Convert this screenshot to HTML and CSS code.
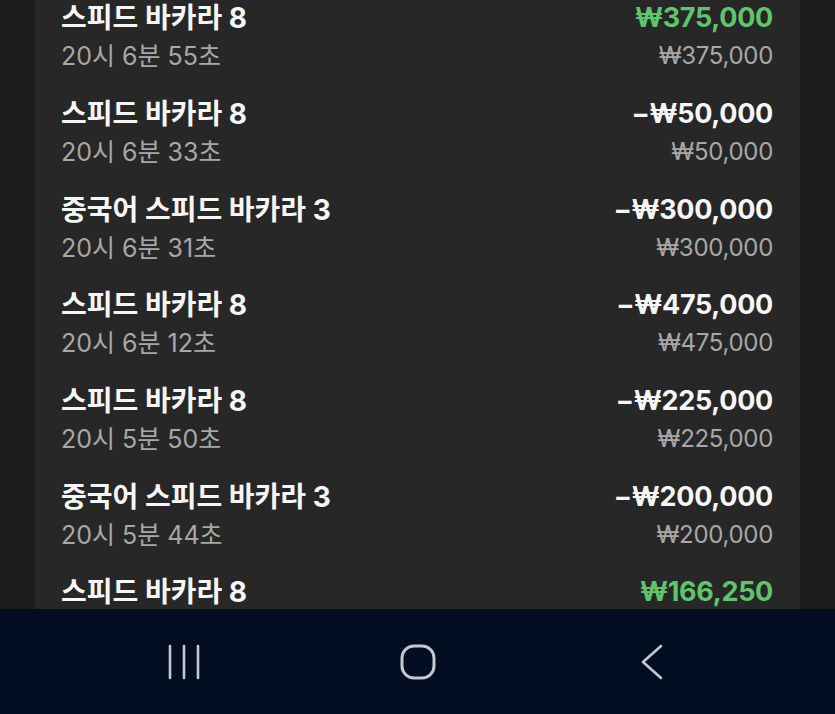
FILE: index.html
```html
<!DOCTYPE html>
<html lang="ko">
<head>
  <meta charset="UTF-8">
  <meta name="viewport" content="width=device-width, initial-scale=1">
  <title>베팅 내역</title>
  <link rel="stylesheet" href="styles.css">
</head>
<body>
  <div class="screen">
    <div class="content">
      <div class="card">
        <ul class="bet-list">
          <li class="bet-row">
            <div class="bet-info">
              <div class="bet-game">스피드 바카라 8</div>
              <div class="bet-time">20시 6분 55초</div>
            </div>
            <div class="bet-money">
              <div class="bet-result win">₩375,000</div>
              <div class="bet-stake">₩375,000</div>
            </div>
          </li>
          <li class="bet-row">
            <div class="bet-info">
              <div class="bet-game">스피드 바카라 8</div>
              <div class="bet-time">20시 6분 33초</div>
            </div>
            <div class="bet-money">
              <div class="bet-result">−₩50,000</div>
              <div class="bet-stake">₩50,000</div>
            </div>
          </li>
          <li class="bet-row">
            <div class="bet-info">
              <div class="bet-game">중국어 스피드 바카라 3</div>
              <div class="bet-time">20시 6분 31초</div>
            </div>
            <div class="bet-money">
              <div class="bet-result">−₩300,000</div>
              <div class="bet-stake">₩300,000</div>
            </div>
          </li>
          <li class="bet-row">
            <div class="bet-info">
              <div class="bet-game">스피드 바카라 8</div>
              <div class="bet-time">20시 6분 12초</div>
            </div>
            <div class="bet-money">
              <div class="bet-result">−₩475,000</div>
              <div class="bet-stake">₩475,000</div>
            </div>
          </li>
          <li class="bet-row">
            <div class="bet-info">
              <div class="bet-game">스피드 바카라 8</div>
              <div class="bet-time">20시 5분 50초</div>
            </div>
            <div class="bet-money">
              <div class="bet-result">−₩225,000</div>
              <div class="bet-stake">₩225,000</div>
            </div>
          </li>
          <li class="bet-row">
            <div class="bet-info">
              <div class="bet-game">중국어 스피드 바카라 3</div>
              <div class="bet-time">20시 5분 44초</div>
            </div>
            <div class="bet-money">
              <div class="bet-result">−₩200,000</div>
              <div class="bet-stake">₩200,000</div>
            </div>
          </li>
          <li class="bet-row">
            <div class="bet-info">
              <div class="bet-game">스피드 바카라 8</div>
            </div>
            <div class="bet-money">
              <div class="bet-result win">₩166,250</div>
            </div>
          </li>
        </ul>
      </div>
    </div>

    <nav class="navbar">
      <button class="nav-btn" aria-label="최근 앱">
        <svg width="34" height="36" viewBox="0 0 34 36">
          <path d="M3 2v32M17 2v32M31 2v32" stroke="#c4c7ce" stroke-width="2.6" stroke-linecap="round" fill="none"/>
        </svg>
      </button>
      <button class="nav-btn" aria-label="홈">
        <svg width="36" height="36" viewBox="0 0 36 36">
          <rect x="2" y="2" width="32" height="32" rx="12" stroke="#c4c7ce" stroke-width="3" fill="none"/>
        </svg>
      </button>
      <button class="nav-btn" aria-label="뒤로">
        <svg width="24" height="36" viewBox="0 0 24 36">
          <path d="M21 2L3 18l18 16" stroke="#c4c7ce" stroke-width="2.6" stroke-linecap="round" stroke-linejoin="round" fill="none"/>
        </svg>
      </button>
    </nav>
  </div>
</body>
</html>
```

FILE: styles.css
```css
html, body {
  margin: 0;
  padding: 0;
  height: 100%;
}
body {
  background: #1c1c1c;
  color: #f4f4f4;
  font-family: "Inter", "Noto Sans CJK KR", sans-serif;
  overflow: hidden;
}
.screen {
  display: flex;
  flex-direction: column;
  height: 714px;
}
.content {
  flex: 1;
  overflow: hidden;
  padding: 0 35px;
}
.card {
  background: #272727;
  height: 100%;
  overflow: hidden;
}
.bet-list {
  list-style: none;
  margin: -10px 0 0 0;
  padding: 0 27px 0 26px;
}
.bet-row {
  display: flex;
  justify-content: space-between;
  align-items: flex-start;
  padding: 14.33px 0;
}
.bet-game,
.bet-result {
  font-size: 28px;
  font-weight: 700;
  line-height: 28px;
  color: #f6f6f6;
}
.bet-result {
  font-size: 27px;
  letter-spacing: -0.3px;
}
.bet-time,
.bet-stake {
  margin-top: 9px;
  font-size: 25px;
  line-height: 30px;
  color: #a7a7a7;
}
.bet-stake {
  font-size: 24px;
  letter-spacing: -0.3px;
}
.bet-money {
  text-align: right;
}
.bet-result.win {
  color: #5fc56c;
}
/* android system bar */
.navbar {
  height: 105px;
  flex: none;
  background: #020d21;
  display: flex;
  align-items: center;
  gap: 174px;
  padding-left: 154px;
}
.nav-btn {
  background: none;
  border: 0;
  padding: 0;
  display: flex;
  align-items: center;
  justify-content: center;
  width: 60px;
  height: 50px;
  cursor: pointer;
}
```
